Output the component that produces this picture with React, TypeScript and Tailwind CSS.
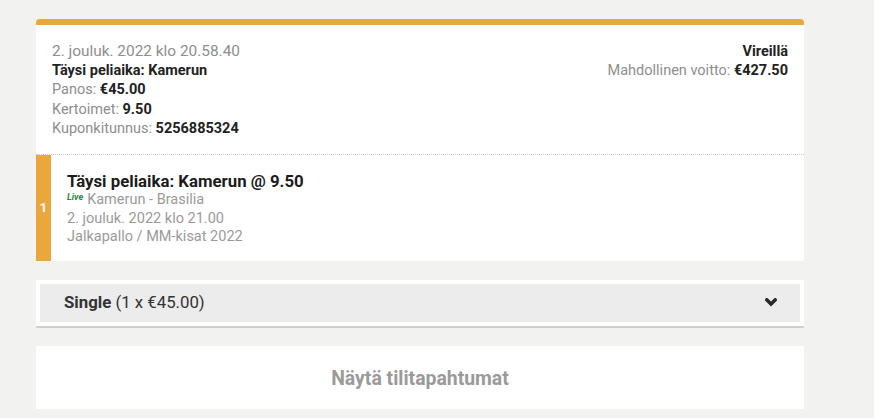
export default function App() {
  return (
    <div className="min-h-[418px] w-full bg-[#f2f2f1] pt-[19px] font-['Roboto',sans-serif]">
      <div className="ml-[36px] w-[768px]">
        {/* Coupon card */}
        <div className="overflow-hidden rounded-t-[4px] border-t-[6px] border-[#eaa83c] bg-white">
          <div className="flex justify-between border-b border-dotted border-[#c8c8c8] px-4 pt-[17px] pb-[16px] text-[14.5px] leading-[19.2px]">
            <div className="text-[#8e8e8e]">
              <div className="text-[15.4px]">2. jouluk. 2022 klo 20.58.40</div>
              <div className="font-bold text-[#222]">Täysi peliaika: Kamerun</div>
              <div>
                Panos: <span className="font-bold text-[#222]">€45.00</span>
              </div>
              <div>
                Kertoimet: <span className="font-bold text-[#222]">9.50</span>
              </div>
              <div>
                Kuponkitunnus: <span className="font-bold text-[#222]">5256885324</span>
              </div>
            </div>
            <div className="text-right text-[#8e8e8e]">
              <div className="font-bold text-[#222]">Vireillä</div>
              <div>
                Mahdollinen voitto: <span className="font-bold text-[#222]">€427.50</span>
              </div>
            </div>
          </div>

          {/* Selection */}
          <div className="flex">
            <div className="flex w-[15px] items-center justify-center bg-[#eaa83c] text-[13px] font-bold text-white">
              1
            </div>
            <div className="px-4 pt-[16px] pb-[14px] text-[14.5px] leading-[18.5px] text-[#9a9a9a]">
              <div className="text-[16.8px] leading-[20px] font-bold text-[#1c1c1c]">
                Täysi peliaika: Kamerun @ 9.50
              </div>
              <div className="flex items-start">
                <span className="mr-[4px] text-[9px] leading-[12px] font-bold italic text-[#1f8a3c]">Live</span>
                <span>Kamerun - Brasilia</span>
              </div>
              <div>2. jouluk. 2022 klo 21.00</div>
              <div>Jalkapallo / MM-kisat 2022</div>
            </div>
          </div>
        </div>

        {/* Single bar */}
        <div className="mt-[19px] border-b-2 border-[#cfcfcf] bg-white p-[4px]">
          <div className="flex h-[38px] items-center justify-between bg-[#ececec] pr-[23px] pl-[24px] text-[16.8px]">
            <div className="text-[#333]">
              <span className="font-bold">Single</span> (1 x €45.00)
            </div>
            <svg width="12" height="9" viewBox="0 0 12 9">
              <path d="M1.8 1.8 L6 6 L10.2 1.8" fill="none" stroke="#2a2a2a" strokeWidth="3.4" strokeLinecap="square" />
            </svg>
          </div>
        </div>

        {/* Button */}
        <div className="mt-[18px] flex h-[63px] items-center justify-center bg-white pt-[4px] text-[19.4px] font-bold text-[#9a9a9a]">
          Näytä tilitapahtumat
        </div>
      </div>
    </div>
  );
}
